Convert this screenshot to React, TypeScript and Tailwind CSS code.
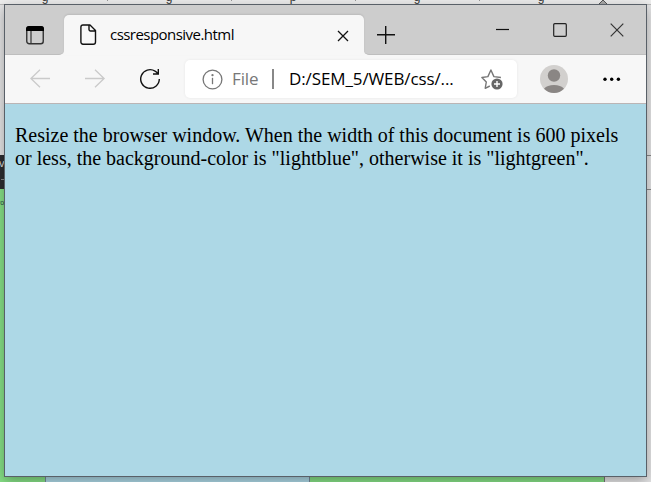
import React from "react";

const ui = "font-['Open_Sans','Noto_Sans',sans-serif]";

const rulerMarks = ["g", "", "g", "", "p", "", "g", "", "g"];

function Backdrop() {
  return (
    <div className="absolute inset-0 flex flex-col overflow-hidden bg-[#e4e4e5]">
      <div className="relative h-1 bg-[#ededed]">
        <div className="absolute -top-[10px] left-[14px] flex items-end font-['Liberation_Sans',sans-serif] text-[12px] leading-[14px] text-[#333]">
          {rulerMarks.map((mark, i) => (
            <div key={i} className="flex w-[62px] justify-center">
              {mark ? <span>{mark}</span> : <i className="mb-[3px] h-[8px] w-px bg-[#999]" />}
            </div>
          ))}
        </div>
        <svg className="absolute left-[597px] top-0" width="12" height="5"><path d="M1 5 6 0l5 5z" fill="#aaa" stroke="#555" /></svg>
      </div>
      <div className="flex h-[151px] border-t border-[#bbb]" />
      <div className="h-[34px] w-[605px] bg-[#2c2d31] font-['Liberation_Sans',sans-serif] text-[11px] leading-[16px] text-[#ddd]">
        <div className="-ml-px">v</div>
        <div className="ml-px mt-[8px] h-px w-1 bg-[#888]" />
      </div>
      <div className="flex min-h-0 flex-1">
        <div className="flex w-[605px] justify-start border-r border-[#777] bg-[#86e086]">
          <div className="w-[45px] font-['Liberation_Sans',sans-serif] text-[7px] leading-[28px] text-[#244]"><div className="-ml-[2px]">ro</div></div>
          <div className="w-[265px] border-x border-[#789] bg-[#add8e6]" />
        </div>
      </div>
      <div className="absolute left-[640px] top-[155px] h-[35px] w-3 border-y border-[#888]" />
    </div>
  );
}

function TitleBar() {
  return (
    <div className="flex h-[50px] shrink-0 bg-[#cdcdcd]">
      <div className="w-[59px] bg-[#f7f7f7]">
        <div className="h-full rounded-br-[5px] border-b border-[#bebebe] bg-[#cdcdcd] pl-[21px] pt-[21px]">
          <svg width="19" height="19" viewBox="0 0 19 19" fill="none">
            <rect x=".75" y=".75" width="16.5" height="17" rx="2.5" stroke="#333" strokeWidth="1.4" />
            <path d="M0 5V3a3 3 0 0 1 3-3h12a3 3 0 0 1 3 3v2z" fill="#000" />
            <path d="M5 5v12.5" stroke="#333" strokeWidth="1.2" />
          </svg>
        </div>
      </div>
      <div className="relative mt-[10px] flex w-[300px] items-start rounded-t-[5px] bg-[#f7f7f7] shadow-[0_-1px_2px_#00000018]">
        <svg className="ml-4 mt-[9px]" width="17" height="22" viewBox="0 0 17 22" fill="none" stroke="#111" strokeWidth="1.4" strokeLinejoin="round">
          <path d="M3 1h7l5.5 5.5V18a2.3 2.3 0 0 1-2.3 2.3H3A2.2 2.2 0 0 1 .9 18V3A2.1 2.1 0 0 1 3 1zM9 1v4.5A1.5 1.5 0 0 0 10.5 7h5" />
        </svg>
        <span className={`${ui} ml-[13px] mt-[8px] w-[150px] whitespace-nowrap text-[15px] leading-[22px] tracking-[-0.54px] text-black`}>cssresponsive.html</span>
        <svg className="ml-auto mr-[15px] mt-[15px]" width="12" height="12" fill="none" stroke="#111" strokeWidth="1.3"><path d="m1 1 10 10M11 1 1 11" /></svg>
      </div>
      <div className="flex flex-1 bg-[#f7f7f7]">
        <div className="flex flex-1 rounded-bl-[5px] border-b border-[#bebebe] bg-[#cdcdcd]">
          <svg className="ml-[13px] mt-[21px]" width="18" height="18" stroke="#111" strokeWidth="1.4"><path d="M8.7 0v18M0 8.7h18" /></svg>
          <svg className="ml-[101px] mt-[18px]" width="13" height="14" stroke="#111" strokeWidth="1.2"><path d="M0 6.5h13" /></svg>
          <svg className="ml-[44px] mt-[18px]" width="14" height="14" fill="none" stroke="#222" strokeWidth="1.2"><rect x=".7" y=".7" width="12.6" height="12.6" rx="1" /></svg>
          <svg className="ml-[43px] mt-[18px]" width="14" height="14" fill="none" stroke="#333" strokeWidth="1.2"><path d="m.7.7 12.6 12.6M13.3.7.7 13.3" /></svg>
        </div>
      </div>
    </div>
  );
}

function Toolbar() {
  return (
    <div className="flex h-[49px] shrink-0 items-start border-b border-[#bbb5b5] bg-[#f7f7f7]">
      <svg className="ml-[25px] mt-[14px]" width="21" height="20" fill="none" stroke="#cacaca" strokeWidth="1.3"><path d="M20 9.5H1M10 .7.9 9.5l9.1 8.8" /></svg>
      <svg className="ml-[34px] mt-[14px]" width="21" height="20" fill="none" stroke="#cacaca" strokeWidth="1.3"><path d="M0 9.5h19M10 .7l9.1 8.8-9.1 8.8" /></svg>
      <svg className="ml-[34px] mt-[13px]" width="21" height="22" fill="none" stroke="#111" strokeWidth="1.4"><path d="M19.3 11a9.3 9.3 0 1 1-4.2-7.8q1.7 1 2.8 2.6M18.3 1v5h-5.3" /></svg>
      <div className="ml-[24px] mt-[5px] flex h-[38px] w-[332px] items-start rounded-[5px] bg-white shadow-[0_0_3px_#00000012]">
        <svg className="ml-[17px] mt-[9px]" width="21" height="21" fill="none" stroke="#777" strokeWidth="1.3"><circle cx="10.5" cy="10.5" r="9.4" /><path d="M10.5 8.8v6.4" /><circle cx="10.5" cy="6.2" r=".5" fill="#777" /></svg>
        <span className={`${ui} ml-[9px] mt-[7px] w-[31px] whitespace-nowrap text-[17px] leading-6 tracking-[-0.1px] text-[#777]`}>File</span>
        <div className="ml-[9px] mt-[9px] h-[20px] w-[2px] bg-[#888]" />
        <span className={`${ui} ml-[15px] mt-[7px] w-[180px] whitespace-nowrap text-[17px] leading-6 tracking-[-0.11px] text-black`}>D:/SEM_5/WEB/css/...</span>
        <svg className="ml-[12px] mt-[9px]" width="23" height="22" fill="none" stroke="#777" strokeWidth="1.4" strokeLinejoin="round">
          <path d="M8.8 17 4.2 19.3 5.3 13 .9 8.5l6-.9L9.9 1l3 6.6 7 .9" />
          <circle cx="16" cy="15" r="5.6" fill="#666" stroke="none" /><path d="M16 12v6m-3-3h6" stroke="white" />
        </svg>
      </div>
      <svg className="ml-[23px] mt-[10px]" width="28" height="28" viewBox="0 0 28 28">
        <circle cx="14" cy="14" r="14" fill="#d2d0ce" /><circle cx="14" cy="10.5" r="6.2" fill="#8a8684" />
        <path d="M4 23.7a11.5 7.2 0 0 1 20 0 14 14 0 0 1-20 0" fill="#8a8684" />
      </svg>
      <svg className="ml-[35px] mt-[22px]" width="18" height="5"><circle cx="2" cy="2.3" r="1.7" /><circle cx="8.7" cy="2.3" r="1.7" /><circle cx="15.4" cy="2.3" r="1.7" /></svg>
    </div>
  );
}

export default function App() {
  return (
    <div className="relative h-[482px] w-[651px] overflow-hidden">
      <Backdrop />
      <div className="absolute left-1 top-1 flex h-[473px] w-[643px] flex-col overflow-hidden border border-[#596068] bg-[#add8e6] shadow-[0_4px_12px_#00000050]">
        <TitleBar />
        <Toolbar />
        <main className="flex-1 pl-[10px] pt-[20px] font-['Liberation_Serif',serif] text-[20px] leading-[23px] text-black">
          <p className="whitespace-nowrap">Resize the browser window. When the width of this document is 600 pixels<br />or less, the background-color is "lightblue", otherwise it is "lightgreen".</p>
        </main>
      </div>
    </div>
  );
}
